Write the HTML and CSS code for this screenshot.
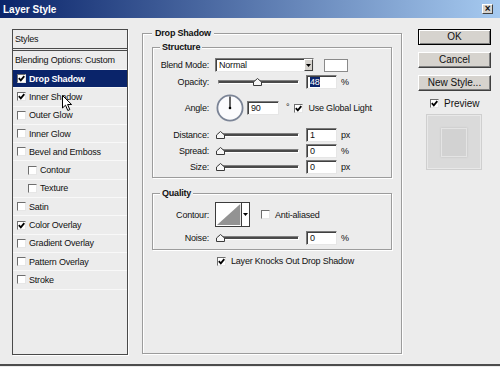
FILE: index.html
```html
<!DOCTYPE html>
<html lang="en">
<head>
    <meta charset="UTF-8">
    <title>Layer Style</title>
    <link rel="stylesheet" href="styles.css">
</head>
<body>
<div class="window">
    <div class="titlebar">
        <span class="title">Layer Style</span>
        <span class="close-btn">&#215;</span>
    </div>

    <div class="content">
        <!-- Lista de estilos -->
        <div class="styles-panel">
            <div class="panel-head">Styles</div>
            <div class="panel-item first">Blending Options: Custom</div>
            <div class="panel-item selected"><span class="cb checked"><svg viewBox="0 0 7 7"><path d="M0.8 3.2 L2.8 5.3 L6.3 1.2"/></svg></span>Drop Shadow</div>
            <div class="panel-item"><span class="cb checked"><svg viewBox="0 0 7 7"><path d="M0.8 3.2 L2.8 5.3 L6.3 1.2"/></svg></span>Inner Shadow</div>
            <div class="panel-item"><span class="cb"></span>Outer Glow</div>
            <div class="panel-item"><span class="cb"></span>Inner Glow</div>
            <div class="panel-item"><span class="cb"></span>Bevel and Emboss</div>
            <div class="panel-item sub"><span class="cb"></span>Contour</div>
            <div class="panel-item sub"><span class="cb"></span>Texture</div>
            <div class="panel-item"><span class="cb"></span>Satin</div>
            <div class="panel-item"><span class="cb checked"><svg viewBox="0 0 7 7"><path d="M0.8 3.2 L2.8 5.3 L6.3 1.2"/></svg></span>Color Overlay</div>
            <div class="panel-item"><span class="cb"></span>Gradient Overlay</div>
            <div class="panel-item"><span class="cb"></span>Pattern Overlay</div>
            <div class="panel-item"><span class="cb"></span>Stroke</div>
            <svg class="cursor" viewBox="0 0 11 17" width="11" height="17">
                <path d="M0.5 0.5 L0.5 13 L3.5 10.2 L5.8 15.5 L7.8 14.6 L5.6 9.5 L9.6 9.5 Z" fill="#fff" stroke="#000" stroke-width="1"/>
            </svg>
        </div>

        <!-- Drop Shadow -->
        <fieldset class="group main-group">
            <legend>Drop Shadow</legend>

            <fieldset class="group sub-group structure">
                <legend>Structure</legend>

                <div class="field-row row-blend">
                    <span class="label">Blend Mode:</span>
                    <div class="select">
                        <span class="select-text">Normal</span>
                        <span class="select-arrow"><svg viewBox="0 0 5 3" width="5" height="3"><path d="M0 0 H5 L2.5 3 Z"/></svg></span>
                    </div>
                    <div class="swatch"></div>
                </div>

                <div class="field-row row-opacity">
                    <span class="label">Opacity:</span>
                    <div class="slider">
                        <svg class="thumb" style="left:34px" viewBox="0 0 9 8" width="9" height="8"><path d="M0.5 7.5 V4 L4.5 0.5 L8.5 4 V7.5 Z"/></svg>
                    </div>
                    <div class="num"><span class="sel">48</span></div>
                    <span class="unit">%</span>
                </div>

                <div class="field-row row-angle">
                    <span class="label">Angle:</span>
                    <svg class="dial" viewBox="0 0 28 28" width="28" height="28">
                        <circle cx="14" cy="14" r="12.6" fill="#fbfbfd" stroke="#7b8496" stroke-width="1.8"/>
                        <line x1="14" y1="14" x2="14" y2="2.6" stroke="#000" stroke-width="1.2"/>
                        <circle cx="14" cy="14" r="1.3" fill="#000"/>
                    </svg>
                    <div class="num angle-num">90</div>
                    <span class="deg">&#176;</span>
                    <span class="cb checked gl-cb"><svg viewBox="0 0 7 7"><path d="M0.8 3.2 L2.8 5.3 L6.3 1.2"/></svg></span>
                    <span class="cb-label">Use Global Light</span>
                </div>

                <div class="field-row row-distance">
                    <span class="label">Distance:</span>
                    <div class="slider">
                        <svg class="thumb" style="left:-3px" viewBox="0 0 9 8" width="9" height="8"><path d="M0.5 7.5 V4 L4.5 0.5 L8.5 4 V7.5 Z"/></svg>
                    </div>
                    <div class="num">1</div>
                    <span class="unit">px</span>
                </div>

                <div class="field-row">
                    <span class="label">Spread:</span>
                    <div class="slider">
                        <svg class="thumb" style="left:-3px" viewBox="0 0 9 8" width="9" height="8"><path d="M0.5 7.5 V4 L4.5 0.5 L8.5 4 V7.5 Z"/></svg>
                    </div>
                    <div class="num">0</div>
                    <span class="unit">%</span>
                </div>

                <div class="field-row">
                    <span class="label">Size:</span>
                    <div class="slider">
                        <svg class="thumb" style="left:-3px" viewBox="0 0 9 8" width="9" height="8"><path d="M0.5 7.5 V4 L4.5 0.5 L8.5 4 V7.5 Z"/></svg>
                    </div>
                    <div class="num">0</div>
                    <span class="unit">px</span>
                </div>
            </fieldset>

            <fieldset class="group sub-group quality">
                <legend>Quality</legend>

                <div class="field-row row-contour">
                    <span class="label">Contour:</span>
                    <div class="contour">
                        <svg class="contour-curve" viewBox="0 0 26 23" width="26" height="23" preserveAspectRatio="none">
                            <rect width="26" height="23" fill="#fff"/>
                            <path d="M1 22 L25 1 V22 Z" fill="#939393"/>
                        </svg>
                        <span class="contour-arrow"><svg viewBox="0 0 5 3" width="5" height="3"><path d="M0 0 H5 L2.5 3 Z"/></svg></span>
                    </div>
                    <span class="cb aa-cb"></span>
                    <span class="cb-label">Anti-aliased</span>
                </div>

                <div class="field-row row-noise">
                    <span class="label">Noise:</span>
                    <div class="slider">
                        <svg class="thumb" style="left:-3px" viewBox="0 0 9 8" width="9" height="8"><path d="M0.5 7.5 V4 L4.5 0.5 L8.5 4 V7.5 Z"/></svg>
                    </div>
                    <div class="num">0</div>
                    <span class="unit">%</span>
                </div>
            </fieldset>

            <div class="field-row knockout">
                <span class="cb checked"><svg viewBox="0 0 7 7"><path d="M0.8 3.2 L2.8 5.3 L6.3 1.2"/></svg></span>
                <span class="cb-label">Layer Knocks Out Drop Shadow</span>
            </div>
        </fieldset>

        <!-- Botões -->
        <div class="side">
            <div class="btn default">OK</div>
            <div class="btn">Cancel</div>
            <div class="btn">New Style...</div>
            <div class="preview-row">
                <span class="cb checked"><svg viewBox="0 0 7 7"><path d="M0.8 3.2 L2.8 5.3 L6.3 1.2"/></svg></span>
                <span class="cb-label">Preview</span>
            </div>
            <div class="preview-box">
                <div class="preview-inner"></div>
            </div>
        </div>
    </div>
</div>
</body>
</html>
```

FILE: styles.css
```css
/* Reset */
* {
    margin: 0;
    padding: 0;
    box-sizing: border-box;
}

body {
    width: 500px;
    height: 367px;
    overflow: hidden;
    background: #ececec;
    font-family: "Liberation Sans", Arial, sans-serif;
    font-size: 9px;
    letter-spacing: -0.2px;
    color: #111;
}

/* Janela */
.window {
    height: 366px;
    background: #ececec;
    border-bottom: 2px solid #4c4c4c;
}

.titlebar {
    height: 18px;
    background: linear-gradient(to right, #0a246a, #a6caf0);
    display: flex;
    align-items: center;
    justify-content: space-between;
    padding: 0 7px 0 3px;
}

.title {
    color: #fff;
    font-weight: bold;
    font-size: 10px;
    letter-spacing: 0;
}

.close-btn {
    width: 11px;
    height: 10px;
    background: #d6d3ce;
    border: 1px solid;
    border-color: #fff #404040 #404040 #fff;
    font-size: 10px;
    line-height: 7px;
    text-align: center;
    font-weight: bold;
}

.content {
    display: flex;
    align-items: flex-start;
    padding: 9px 0 0 12px;
}

/* Painel de estilos */
.styles-panel {
    position: relative;
    width: 116px;
    height: 326px;
    margin-top: 2px;
    border: 1px solid #4a4a4a;
    box-shadow: 1px 1px 0 #fff;
}

.panel-head {
    height: 21px;
    line-height: 18px;
    padding-left: 2px;
    border-bottom: 3px double #4a4a4a;
}

.panel-item {
    display: flex;
    align-items: center;
    height: 18.3px;
    padding-left: 4px;
    border-bottom: 1px solid #f8f8f8;
}

.panel-item.first {
    height: 19px;
    padding-left: 2px;
}

.panel-item.sub {
    padding-left: 15px;
}

.panel-item.selected {
    background: #0a246a;
    color: #fff;
    font-weight: bold;
}

.panel-item .cb {
    margin-right: 3px;
}

.cursor {
    position: absolute;
    left: 49px;
    top: 65px;
}

/* Checkbox */
.cb {
    display: inline-flex;
    align-items: center;
    justify-content: center;
    flex-shrink: 0;
    width: 9px;
    height: 9px;
    background: #fff;
    border: 1px solid;
    border-color: #6e6e6e #e6e6e6 #e6e6e6 #6e6e6e;
}

.cb svg {
    width: 7px;
    height: 7px;
}

.cb svg path {
    fill: none;
    stroke: #000;
    stroke-width: 1.8;
}

.cb-label {
    margin-left: 5px;
}

/* Grupos */
.group {
    border: 1px solid #9c9c9c;
    box-shadow: inset 1px 1px 0 #fff, 1px 1px 0 #fff;
}

.group legend {
    font-weight: bold;
    line-height: 12px;
    padding: 0 3px;
    background: #ececec;
}

.main-group {
    width: 257px;
    height: 327px;
    margin-left: 14px;
    padding: 0 9px;
}

.sub-group {
    width: 240px;
    padding: 0;
}

.sub-group legend {
    margin-left: 7px;
    padding: 0 2px;
}

.structure {
    margin-top: 2px;
    padding-bottom: 2px;
}

.quality {
    margin-top: 9px;
    padding-bottom: 3px;
}

/* Linhas */
.field-row {
    display: flex;
    align-items: center;
    height: 16px;
}

.label {
    width: 56px;
    margin-right: 6px;
    text-align: right;
}

.row-blend { margin-top: 4px; }
.row-opacity { margin-top: 1px; }
.row-angle { height: 28px; margin-top: 4px; }
.row-distance { margin-top: 5px; }
.row-contour { height: 25px; margin-top: 3px; }
.row-noise { margin-top: 3px; }

.knockout {
    margin-top: 3px;
    padding-left: 65px;
}

/* Controles */
.select {
    display: flex;
    width: 99px;
    height: 14px;
    background: #fff;
    border: 1px solid;
    border-color: #7a7a7a #e6e6e6 #e6e6e6 #7a7a7a;
    box-shadow: inset 1px 1px 0 #404040;
}

.select-text {
    flex: 1;
    padding-left: 3px;
    line-height: 12px;
}

.select-arrow {
    width: 9px;
    display: flex;
    align-items: center;
    justify-content: center;
    background: #d6d3ce;
    border: 1px solid;
    border-color: #fff #404040 #404040 #fff;
}

.swatch {
    width: 24px;
    height: 13px;
    margin-left: 10px;
    background: #fff;
    border: 1px solid #8a8a8a;
}

.slider {
    position: relative;
    width: 81px;
    height: 4px;
    margin-left: 3px;
    background: #4a4a4a;
    border: 1px solid;
    border-color: #808080 #fff #fff #808080;
}

.thumb {
    position: absolute;
    top: -3px;
}

.thumb path {
    fill: #f6f6f6;
    stroke: #3a3a3a;
    stroke-width: 1;
}

.num {
    width: 31px;
    height: 14px;
    margin-left: 7px;
    padding-left: 3px;
    line-height: 12px;
    background: #fff;
    border: 1px solid;
    border-color: #7a7a7a #e6e6e6 #e6e6e6 #7a7a7a;
    box-shadow: inset 1px 1px 0 #404040;
}

.num .sel {
    background: #0a246a;
    color: #fff;
}

.unit {
    margin-left: 4px;
}

.dial {
    margin-left: 1px;
}

.angle-num {
    width: 32px;
    margin-left: 3px;
}

.deg {
    margin-left: 7px;
    align-self: flex-start;
    margin-top: 8px;
}

.gl-cb {
    margin-left: 5px;
}

.contour {
    display: flex;
    width: 35px;
    height: 25px;
    border: 1px solid #3c3c3c;
    background: #fff;
}

.contour-arrow {
    width: 8px;
    display: flex;
    align-items: center;
    justify-content: center;
    border-left: 1px solid #3c3c3c;
}

.aa-cb {
    margin-left: 11px;
}

/* Coluna de botões */
.side {
    width: 73px;
    margin-left: 16px;
    margin-top: 2px;
}

.btn {
    height: 16px;
    margin-bottom: 7px;
    background: #d6d3ce;
    border: 1px solid;
    border-color: #fff #404040 #404040 #fff;
    box-shadow: inset -1px -1px 0 #808080;
    font-size: 10px;
    letter-spacing: 0;
    line-height: 14px;
    text-align: center;
}

.btn.default {
    border: 1px solid #000;
    box-shadow: inset 1px 1px 0 #fff, inset -1px -1px 0 #808080;
}

.preview-row {
    display: flex;
    align-items: center;
    height: 14px;
    margin-top: -2px;
    padding-left: 12px;
    font-size: 10px;
    letter-spacing: 0;
}

.preview-box {
    display: flex;
    align-items: center;
    justify-content: center;
    width: 54px;
    height: 54px;
    margin: 5px 0 0 9px;
    background: #dadada;
    border: 1px solid #e8e8e8;
    box-shadow: 0 0 0 1px #cfcfcf;
}

.preview-inner {
    width: 26px;
    height: 29px;
    background: #d2d2d2;
    border: 1px solid #e4e4e4;
    box-shadow: 0 0 2px #bdbdbd;
}
```
